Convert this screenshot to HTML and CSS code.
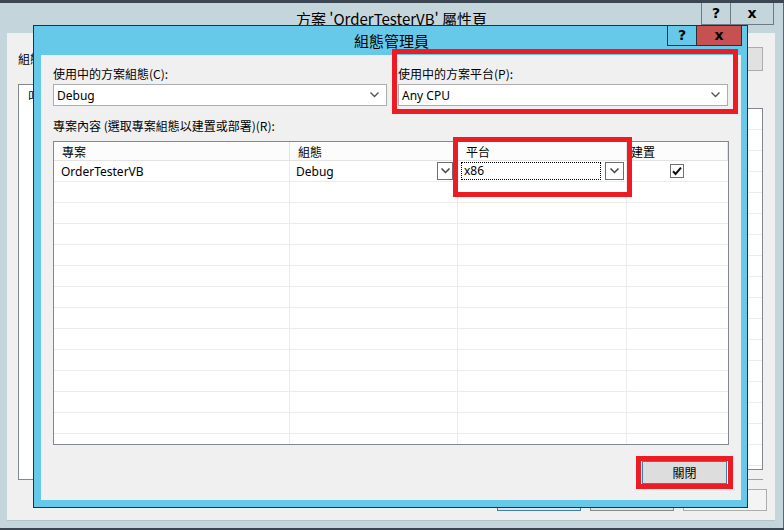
FILE: index.html
```html
<!DOCTYPE html>
<html lang="zh-Hant">
<head>
<meta charset="utf-8">
<title>組態管理員</title>
<link rel="stylesheet" href="styles.css">
</head>
<body>
<div class="back">
  <div class="back-title">
    <div></div>
    <div class="back-title-text">方案 'OrderTesterVB' 屬性頁</div>
    <div class="back-btns">
      <div class="bbtn bhelp">?</div>
      <div class="bbtn bclose">x</div>
    </div>
  </div>
  <div class="back-body">
    <div class="back-main">
      <div class="bl">
        <div class="bl-label">組態</div>
        <div class="bl-list"><span class="bl-item">叫</span></div>
      </div>
      <div class="br">
        <div class="br-btn"></div>
        <div class="br-list"></div>
        <div class="br-line"></div>
      </div>
    </div>
    <div class="back-foot">
      <div class="fbtn fbtn-def"></div>
      <div class="fbtn fbtn-dis"></div>
      <div class="fbtn fbtn-light"></div>
    </div>
  </div>
</div>

<div class="dialog">
  <div class="dlg-title">
    <div></div>
    <div class="dlg-title-text">組態管理員</div>
    <div class="dlg-btns">
      <div class="dbtn dhelp">?</div>
      <div class="dbtn dclose">x</div>
    </div>
  </div>
  <div class="dlg-body">
    <div class="sel-grid">
      <div class="field">
        <div class="lbl">使用中的方案組態(C):</div>
        <div class="select"><span>Debug</span>
          <svg class="chev" width="9" height="6" viewBox="0 0 9 6"><path d="M0.5 0.5 L4.5 4.5 L8.5 0.5" fill="none" stroke="#555" stroke-width="1.4"/></svg>
        </div>
      </div>
      <div class="field">
        <div class="lbl">使用中的方案平台(P):</div>
        <div class="select"><span>Any CPU</span>
          <svg class="chev" width="9" height="6" viewBox="0 0 9 6"><path d="M0.5 0.5 L4.5 4.5 L8.5 0.5" fill="none" stroke="#555" stroke-width="1.4"/></svg>
        </div>
      </div>
    </div>
    <div class="lbl lbl2">專案內容 (選取專案組態以建置或部署)(R):</div>
    <div class="grid">
      <div class="row head">
        <div class="cell">專案</div>
        <div class="cell">組態</div>
        <div class="cell">平台</div>
        <div class="cell">建置</div>
      </div>
      <div class="row">
        <div class="cell">OrderTesterVB</div>
        <div class="cell combo"><span class="ctext">Debug</span>
          <div class="dd dd-s"><svg width="9" height="6" viewBox="0 0 9 6"><path d="M0.5 0.5 L4.5 4.5 L8.5 0.5" fill="none" stroke="#444" stroke-width="1.5"/></svg></div>
        </div>
        <div class="cell combo combo-p"><span class="focus">x86</span>
          <div class="dd dd-l"><svg width="9" height="6" viewBox="0 0 9 6"><path d="M0.5 0.5 L4.5 4.5 L8.5 0.5" fill="none" stroke="#444" stroke-width="1.5"/></svg></div>
        </div>
        <div class="cell center"><div class="chk"><svg width="12" height="12" viewBox="0 0 12 12"><path d="M2 6.2 L4.6 9 L10 2.6" fill="none" stroke="#111" stroke-width="2"/></svg></div></div>
      </div>
      <div class="row"><div class="cell"></div><div class="cell"></div><div class="cell"></div><div class="cell"></div></div>
      <div class="row"><div class="cell"></div><div class="cell"></div><div class="cell"></div><div class="cell"></div></div>
      <div class="row"><div class="cell"></div><div class="cell"></div><div class="cell"></div><div class="cell"></div></div>
      <div class="row"><div class="cell"></div><div class="cell"></div><div class="cell"></div><div class="cell"></div></div>
      <div class="row"><div class="cell"></div><div class="cell"></div><div class="cell"></div><div class="cell"></div></div>
      <div class="row"><div class="cell"></div><div class="cell"></div><div class="cell"></div><div class="cell"></div></div>
      <div class="row"><div class="cell"></div><div class="cell"></div><div class="cell"></div><div class="cell"></div></div>
      <div class="row"><div class="cell"></div><div class="cell"></div><div class="cell"></div><div class="cell"></div></div>
      <div class="row"><div class="cell"></div><div class="cell"></div><div class="cell"></div><div class="cell"></div></div>
      <div class="row"><div class="cell"></div><div class="cell"></div><div class="cell"></div><div class="cell"></div></div>
      <div class="row"><div class="cell"></div><div class="cell"></div><div class="cell"></div><div class="cell"></div></div>
      <div class="row"><div class="cell"></div><div class="cell"></div><div class="cell"></div><div class="cell"></div></div>
      <div class="row"><div class="cell"></div><div class="cell"></div><div class="cell"></div><div class="cell"></div></div>
    </div>
    <div class="dlg-foot">
      <div class="close-btn">關閉</div>
    </div>
  </div>
</div>

<div class="mark mark-platform"></div>
<div class="mark mark-col"></div>
<div class="mark mark-close"></div>
</body>
</html>
```

FILE: styles.css
```css
html, body {
  margin: 0;
  padding: 0;
}
body {
  width: 784px;
  height: 530px;
  overflow: hidden;
  position: relative;
  background: #3b4652;
  font-family: "Noto Sans", "Noto Sans CJK TC", sans-serif;
  font-size: 12px;
  color: #000;
}

/* ---------- back window ---------- */
.back {
  position: absolute;
  left: 0;
  top: 3px;
  width: 783px;
  height: 525px;
  background: #c4d6dc;
  border-right: 1px solid #5b6670;
}
.back-title {
  height: 30px;
  display: grid;
  grid-template-columns: 1fr auto 1fr;
}
.back-title-text {
  font-family: "Noto Sans CJK TC", "Noto Sans", sans-serif;
  font-size: 15px;
  line-height: 30px;
  padding-top: 1px;
}
.back-btns {
  display: flex;
  justify-content: flex-end;
  align-items: flex-start;
  padding-right: 9px;
}
.bbtn {
  height: 21px;
  border: 1px solid #6f7a82;
  border-top: none;
  text-align: center;
  font-family: "DejaVu Sans", sans-serif;
  font-weight: bold;
  font-size: 14px;
  line-height: 20px;
}
.bhelp { width: 28px; }
.bclose { width: 42px; border-left: none; }

.back-body {
  margin-left: 7px;
  width: 768px;
  height: 487px;
  background: #f0f0f0;
  border-bottom: 1px solid #b5c2c6;
  display: flex;
  flex-direction: column;
}
.back-main {
  flex: 1;
  display: flex;
  padding: 14px 12px 0 11px;
}
.bl { flex: 1; }
.bl-label {
  font-family: "Noto Sans CJK TC", sans-serif;
  margin-top: 5px;
  line-height: 14px;
}
.bl-list {
  margin-top: 18px;
  height: 390px;
  background: #fff;
  border: 1px solid #828790;
  border-right: none;
  padding: 2px 9px;
  font-family: "Noto Sans CJK TC", sans-serif;
}
.br { width: 15px; }
.br-btn {
  height: 22px;
  background: #e1e1e1;
  border: 1px solid #adadad;
  border-left: none;
}
.br-list {
  margin-top: 37px;
  height: 360px;
  background: #fff;
  border: 1px solid #828790;
  border-left: none;
  background-image: repeating-linear-gradient(to bottom, #fff 0, #fff 20px, #ececec 20px, #ececec 21px);
}
.br-line {
  margin-top: 9px;
  height: 1px;
  background: #a0a0a0;
}
.back-foot {
  display: flex;
  justify-content: flex-end;
  gap: 9px;
  padding: 0 8px 9px 0;
}
.fbtn {
  width: 84px;
  height: 22px;
  box-sizing: border-box;
}
.fbtn-def { background: #e5e5e5; border: 1px solid #3c7fb1; }
.fbtn-dis { background: #e1e1e1; border: 1px solid #8a8a8a; }
.fbtn-light { background: #f4f4f4; border: 1px solid #adadad; }

/* ---------- dialog ---------- */
.dialog {
  position: absolute;
  left: 33px;
  top: 25px;
  width: 715px;
  height: 483px;
  box-sizing: border-box;
  border: 1px solid #2b2f33;
  background: #66c9ea;
  padding: 0 5px 7px 7px;
  display: flex;
  flex-direction: column;
}
.dlg-title {
  height: 29px;
  display: grid;
  grid-template-columns: 1fr auto 1fr;
}
.dlg-title-text {
  font-family: "Noto Sans CJK TC", sans-serif;
  font-size: 15px;
  line-height: 30px;
}
.dlg-btns {
  display: flex;
  justify-content: flex-end;
  align-items: flex-start;
}
.dbtn {
  height: 20px;
  box-sizing: border-box;
  border: 1px solid #2b2f33;
  border-top: none;
  text-align: center;
  font-family: "DejaVu Sans", sans-serif;
  font-weight: bold;
  font-size: 14px;
  line-height: 18px;
}
.dhelp { width: 30px; }
.dclose { width: 45px; border-left: none; background: #c75050; }

.dlg-body {
  flex: 1;
  margin-right: 1px;
  background: #f0f0f0;
  padding: 12px 12px 0 12px;
  display: flex;
  flex-direction: column;
}
.sel-grid {
  display: grid;
  grid-template-columns: 334px 330px;
  column-gap: 11px;
}
.lbl {
  font-family: "Noto Sans CJK TC", sans-serif;
  line-height: 14px;
  height: 14px;
}
.select {
  margin-top: 3px;
  height: 22px;
  box-sizing: border-box;
  background: #fff;
  border: 1px solid #adadad;
  display: flex;
  align-items: center;
  justify-content: space-between;
  padding: 0 7px 0 3px;
  font-size: 12px;
}
.lbl2 { margin-top: 13px; }

.grid {
  margin-top: 8px;
  height: 304px;
  box-sizing: border-box;
  border: 1px solid #828790;
  background: #fff;
  overflow: hidden;
  margin-right: 0;
}
.row {
  display: grid;
  grid-template-columns: 236px 168px 169px 1fr;
  height: 21px;
}
.cell {
  box-sizing: border-box;
  border-right: 1px solid #ececec;
  border-bottom: 1px solid #ececec;
  padding-left: 7px;
  display: flex;
  align-items: center;
  position: relative;
}
.cell:last-child { border-right: none; }
.head { height: 19px; background: #fcfcfc; }
.head .cell {
  font-family: "Noto Sans CJK TC", sans-serif;
  border-right: 1px solid #e3e3e3;
  border-bottom: 1px solid #e3e3e3;
  padding-left: 8px;
}
.head .cell:nth-child(4) { padding-left: 4px; }
.combo { justify-content: space-between; padding-left: 6px; padding-right: 4px; }
.combo-p { padding-left: 3px; padding-right: 2px; }
.focus {
  flex: 1;
  height: 18px;
  box-sizing: border-box;
  border: 1px dotted #000;
  padding-left: 2px;
  line-height: 16px;
  margin-right: 4px;
}
.dd {
  height: 18px;
  box-sizing: border-box;
  border: 1px solid #707070;
  background: #fff;
  display: flex;
  align-items: center;
  justify-content: center;
}
.dd-s { width: 16px; }
.dd-l { width: 19px; }
.center { justify-content: center; padding-left: 0; padding-right: 2px; }
.chk {
  width: 14px;
  height: 14px;
  box-sizing: border-box;
  border: 1px solid #707070;
  background: #fff;
  display: flex;
  align-items: center;
  justify-content: center;
}

.dlg-foot {
  display: flex;
  justify-content: flex-end;
  margin-top: 16px;
  padding-right: 2px;
}
.close-btn {
  width: 85px;
  height: 23px;
  box-sizing: border-box;
  background: #dddddd;
  border: 1px solid #3c7fb1;
  text-align: center;
  line-height: 21px;
  font-family: "Noto Sans CJK TC", sans-serif;
}

/* ---------- red highlight marks ---------- */
.mark {
  position: absolute;
  box-sizing: border-box;
  border: 5px solid #ed1c24;
}
.mark-platform { left: 392px; top: 49px; width: 346px; height: 65px; }
.mark-col { left: 453px; top: 137px; width: 179px; height: 60px; }
.mark-close { left: 636px; top: 456px; width: 97px; height: 33px; }
```
